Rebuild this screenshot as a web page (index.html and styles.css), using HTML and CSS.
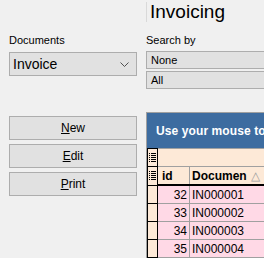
FILE: index.html
```html
<!DOCTYPE html>
<html lang="en">

<head>
    <meta charset="UTF-8">
    <title>Invoicing</title>
    <link rel="stylesheet" href="styles.css">
</head>

<body>
    <div id="app">
        <!-- Left column: document type and actions -->
        <div class="side">
            <label class="caption">Documents</label>
            <div class="combo big">
                <span>Invoice</span>
                <svg class="chevron" width="9" height="5" viewBox="0 0 9 5"><path d="M0.5 0.5 L4.5 4.5 L8.5 0.5" fill="none" stroke="#505050" stroke-width="1"/></svg>
            </div>

            <div class="actions">
                <button class="btn"><u>N</u>ew</button>
                <button class="btn"><u>E</u>dit</button>
                <button class="btn"><u>P</u>rint</button>
            </div>
        </div>

        <!-- Right column: search and grid -->
        <div class="main">
            <h1 class="title">Invoicing</h1>
            <label class="caption">Search by</label>
            <div class="combo small">None</div>
            <div class="combo small">All</div>

            <div class="grid">
                <div class="group-panel">Use your mouse to drag</div>
                <table>
                    <tr class="filter-row">
                        <td class="ind"><span class="lines"><i></i><i></i><i></i><i></i><i></i></span></td>
                        <td colspan="3"></td>
                    </tr>
                    <tr class="head-row">
                        <td class="ind"><span class="lines"><i></i><i></i><i></i><i></i><i></i></span></td>
                        <th class="c-id">id</th>
                        <th class="c-doc">Documen <span class="sort">&#9651;</span></th>
                        <th class="c-more"></th>
                    </tr>
                    <tr><td class="ind"></td><td class="num">32</td><td>IN000001</td><td></td></tr>
                    <tr><td class="ind"></td><td class="num">33</td><td>IN000002</td><td></td></tr>
                    <tr><td class="ind"></td><td class="num">34</td><td>IN000003</td><td></td></tr>
                    <tr><td class="ind"></td><td class="num">35</td><td>IN000004</td><td></td></tr>
                    <tr class="next"><td class="ind"></td><td></td><td></td><td></td></tr>
                </table>
            </div>
        </div>
    </div>
</body>

</html>
```

FILE: styles.css
```css
body {
    margin: 0;
    background-color: #f0f0f0;
    font-family: "Liberation Sans", Arial, sans-serif;
    color: #000;
    overflow: hidden;
}

#app {
    display: flex;
    width: 420px;
}

.side {
    width: 128px;
    padding: 34px 9px 0 9px;
    display: flex;
    flex-direction: column;
}

.main {
    width: 274px;
    display: flex;
    flex-direction: column;
}

.caption {
    font-size: 11px;
    line-height: 12px;
    height: 12px;
    display: block;
}

.combo {
    box-sizing: border-box;
    background-color: #e1e1e1;
    border: 1px solid #adadad;
    display: flex;
    align-items: center;
}

.combo.big {
    margin-top: 6px;
    height: 24px;
    font-size: 14px;
    padding: 0 7px 0 3px;
    justify-content: space-between;
}

.combo.small {
    height: 18px;
    font-size: 11px;
    padding-left: 4px;
}

.main .combo.small:first-of-type {
    margin-top: 5px;
}

.main .combo.small + .combo.small {
    margin-top: 2px;
}

.chevron {
    margin-top: 1px;
}

.actions {
    margin-top: 40px;
    display: flex;
    flex-direction: column;
    gap: 4px;
}

.btn {
    box-sizing: border-box;
    height: 24px;
    background-color: #e1e1e1;
    border: 1px solid #adadad;
    font-family: "Liberation Sans", Arial, sans-serif;
    font-size: 12px;
    padding: 0;
    color: #000;
}

.title {
    margin: 2px 0 12px 0;
    height: 20px;
    border-left: 1px solid #d9d9d9;
    padding-left: 3px;
    font-size: 19px;
    line-height: 20px;
    font-weight: normal;
}

.grid {
    margin-top: 23px;
    border: 1px solid #a0a0a0;
    border-right: none;
}

.group-panel {
    height: 35px;
    background-color: #3d6ca0;
    color: #fff;
    font-weight: bold;
    font-size: 12px;
    letter-spacing: 0.1px;
    line-height: 36px;
    padding-left: 9px;
    white-space: nowrap;
    overflow: hidden;
}

table {
    border-collapse: collapse;
    font-size: 12px;
    table-layout: fixed;
}

td,
th {
    height: 17px;
    padding: 0 2px;
    border: 1px solid #a0a0a0;
    white-space: nowrap;
    overflow: hidden;
}

.ind {
    width: 7px;
    padding: 0 1px;
    background-color: #fde9d7;
    border: 1px solid #000;
}

.filter-row td {
    background-color: #fde9d7;
}

.filter-row td.ind,
.head-row td.ind {
    border: 1px solid #000;
}

.head-row th {
    background-color: #fde9d7;
    text-align: left;
    font-weight: bold;
    border-bottom: 2px solid #000;
    font-size: 12px;
}

.c-id {
    width: 25px;
    padding-left: 4px;
}

.c-doc {
    width: 70px;
}

.c-more {
    width: 120px;
}

.sort {
    color: #a0a0a0;
    font-weight: normal;
    font-size: 12px;
    margin-left: 1px;
}

tr td {
    background-color: #ffd9e6;
}

.num {
    text-align: right;
}

tr.next td {
    background-color: #dff2ee;
}

.lines {
    display: flex;
    flex-direction: column;
    gap: 1px;
    width: 7px;
    margin: 0 auto;
}

.lines i {
    display: block;
    height: 1px;
    background: linear-gradient(to right, #000 0 1px, transparent 1px 2px, #000 2px 7px);
}
```
